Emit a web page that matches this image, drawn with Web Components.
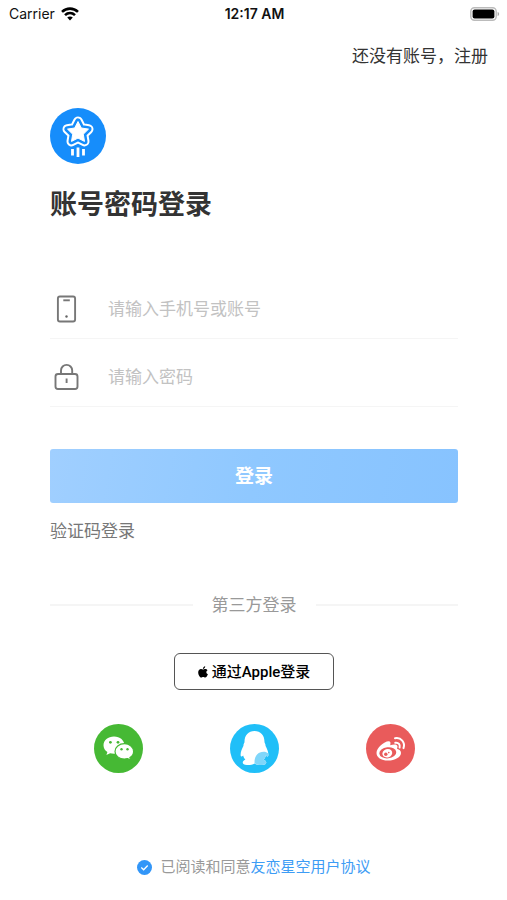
<!DOCTYPE html>
<html lang="zh-CN">
<head>
<meta charset="utf-8">
<meta name="viewport" content="width=device-width, initial-scale=1">
<title>账号密码登录</title>
<style>
  body { margin: 0; background: #fff; color: #333; font-family: Inter, "Noto Sans CJK SC", sans-serif; font-size: 17px; line-height: 24px; }
</style>
</head>
<body>
<login-page></login-page>

<script>
const define = (name, html, setup) => {
  const template = document.createElement('template');
  template.innerHTML = html;
  customElements.define(name, class extends HTMLElement {
    constructor() {
      super();
      this.attachShadow({ mode: 'open' }).append(template.content.cloneNode(true));
    }
    connectedCallback() { if (setup) setup(this, this.shadowRoot); }
  });
};

define('status-bar', `
  <style>
    :host { display: grid; grid-template-columns: 1fr auto 1fr; align-items: center; height: 28px; padding: 0 7px 0 9px; color: #111; font-size: 14px; line-height: 20px; }
    .carrier { display: flex; align-items: center; gap: 6px; }
    .time { font-weight: 600; }
    .battery { justify-self: end; }
    svg { display: block; }
  </style>
  <span class="carrier"><span>Carrier</span>
    <svg width="18" height="14" viewBox="0 0 18 14" fill="none" stroke="#000" stroke-width="2.6" aria-hidden="true">
      <path d="M1 4.9C5.6.5 12.4.5 17 4.9"/><path d="M4 8.1c2.9-2.7 7.1-2.7 10 0"/><path d="M6.2 10.5c1.6-1.5 4-1.5 5.6 0L9 13.4z" fill="#000" stroke="none"/>
    </svg>
  </span>
  <span class="time">12:17 AM</span>
  <svg class="battery" width="30" height="14" viewBox="0 0 30 14" aria-hidden="true">
    <rect x=".8" y=".8" width="25.4" height="12.4" rx="3.6" fill="#fff" stroke="#bbb" stroke-width="1.4"/>
    <rect x="2.6" y="2.6" width="21.8" height="8.8" rx="2" fill="#000"/>
    <path d="M27.6 5c2 .6 2 3.4 0 4z" fill="#aaa"/>
  </svg>`);

define('brand-logo', `
  <style>:host { display: block; } svg { display: block; }</style>
  <svg width="56" height="56" viewBox="0 0 56 56" role="img" aria-label="友恋星空">
    <defs><path id="star" d="M28 13.500L31.300 20l7.200 1.100-5.200 5.100 1.200 7.200-6.500-3.300-6.500 3.300 1.200-7.200-5.200-5.100 7.200-1.100z" stroke-linejoin="round"/></defs>
    <circle cx="28" cy="28" r="28" fill="#168dfb"/>
    <use href="#star" fill="#fff" stroke="#fff" stroke-width="10"/>
    <use href="#star" fill="#168dfb" stroke="#168dfb" stroke-width="6"/>
    <use href="#star" fill="#fff" stroke="#fff" stroke-width="1"/>
    <path d="M22.500 41v6.500M28 39.500v9.500M33.500 41v6.500" stroke="#168dfb" stroke-width="5"/>
    <path d="M22.500 41v6.500M28 39.500v9.500M33.500 41v6.500" stroke="#fff" stroke-width="2.800"/>
  </svg>`);

define('login-field', `
  <style>
    :host { display: block; }
    .row { display: flex; align-items: center; gap: 25px; height: 59px; box-sizing: border-box; border-bottom: 1px solid #f5f5f5; }
    label { display: flex; flex: none; }
    input { flex: 1; min-width: 0; border: 0; outline: 0; padding: 0; background: none; color: #333; font: inherit; }
    input::placeholder { color: #c2c2c2; opacity: 1; }
  </style>
  <div class="row"><label for="value"><slot></slot></label><input id="value"></div>`,
  (host, root) => {
    const input = root.querySelector('input');
    input.type = host.getAttribute('type') || 'text';
    input.placeholder = host.getAttribute('placeholder');
    input.setAttribute('aria-label', host.getAttribute('placeholder'));
  });

define('primary-button', `
  <style>
    :host { display: block; }
    button { display: block; width: 100%; height: 54px; border: 0; border-radius: 3px; padding: 2px 0 0; background: linear-gradient(100deg, #a0cfff, #8fc8ff 50%, #87c3ff); color: #fff; font: inherit; font-size: 19px; font-weight: 700; }
  </style>
  <button type="submit"><slot></slot></button>`);

define('line-divider', `
  <style>
    :host { display: flex; align-items: center; gap: 19px; color: #999; }
    :host::before, :host::after { content: ""; flex: 1; height: 2px; background: #f5f5f5; }
  </style>
  <slot></slot>`);

define('apple-button', `
  <style>
    :host { display: block; }
    button { display: flex; align-items: center; justify-content: center; gap: 4px; height: 37px; padding: 0 23px; border: 1px solid #555; border-radius: 6px; background: #fff; color: #000; font: inherit; font-family: Roboto, "Noto Sans CJK SC", sans-serif; font-size: 15px; font-weight: 500; white-space: nowrap; }
  </style>
  <button type="button">
    <svg width="10" height="12" viewBox="0 0 10 12" aria-hidden="true"><path d="M5 3.5C5.7 3.5 6.3 3 7.3 3c.9 0 1.7.5 2.2 1.2-1.8 1.1-1.5 3.4.4 4.1C9.4 9.7 8.3 11.5 7.2 11.5c-.8 0-1.1-.5-2-.5s-1.3.5-2 .5C1.8 11.5.2 8.8.2 6.5.2 4.300 1.500 3 3 3c.9 0 1.500.5 2 .5zM4.900 2.900C4.900 1.500 5.800.6 7.200.3 7.300 1.800 6.200 2.900 4.900 2.900z"/></svg>
    <span><slot></slot></span>
  </button>`);

define('social-button', `
  <style>
    :host { display: block; }
    button { display: block; padding: 0; border: 0; border-radius: 50%; background: none; }
    ::slotted(svg) { display: block; }
  </style>
  <button type="button"><slot></slot></button>`,
  (host, root) => root.querySelector('button').setAttribute('aria-label', host.getAttribute('name')));

define('terms-agreement', `
  <style>
    :host { display: flex; align-items: center; justify-content: center; font-size: 15px; color: #999; }
    .box { display: grid; margin-right: 8px; }
    input, svg { grid-area: 1 / 1; width: 15px; height: 15px; margin: 0; }
    input { appearance: none; border: 1px solid #bbb; border-radius: 50%; }
    input:checked { border: 0; background: #3296f8; }
    svg { pointer-events: none; }
    input:not(:checked) + svg { visibility: hidden; }
    a { color: #3d9cf5; text-decoration: none; }
  </style>
  <span class="box"><input type="checkbox" id="agree" checked>
    <svg viewBox="0 0 14 14" fill="none" stroke="#fff" stroke-width="1.2" aria-hidden="true"><path d="M4 7l2.200 2.100 3.800-3.900"/></svg></span>
  <label for="agree">已阅读和同意</label><a href="#terms">友恋星空用户协议</a>`);

define('login-page', `
  <style>
    :host { display: block; }
    header { display: flex; justify-content: flex-end; padding: 16px 19px 0; }
    a { text-decoration: none; color: #333; }
    main { padding: 40px 49px 0 50px; }
    h1 { margin: 22px 0 0; font-size: 27px; line-height: 38px; font-weight: 700; }
    form { margin-top: 56px; }
    login-field + login-field { margin-top: 9px; }
    primary-button { margin-top: 42px; }
    .code { display: block; width: max-content; margin-top: 16px; color: #777; }
    line-divider { margin-top: 50px; }
    .apple { display: flex; justify-content: center; margin-top: 36px; }
    .social { display: grid; grid-template-columns: repeat(3, 1fr); justify-items: center; margin-top: 34px; }
    terms-agreement { margin-top: 82px; }
  </style>
  <status-bar></status-bar>
  <header><a href="#register">还没有账号，注册</a></header>
  <main>
    <brand-logo></brand-logo>
    <h1>账号密码登录</h1>
    <form>
      <login-field placeholder="请输入手机号或账号">
        <svg width="33" height="30" viewBox="0 0 33 30" fill="none" stroke="#777" stroke-width="1.900" aria-hidden="true"><rect x="7.900" y="2.500" width="17.200" height="25" rx="2"/><path d="M13.300 6.300h6.500"/><circle cx="16.500" cy="22.500" r="1.200" fill="#666" stroke="none"/></svg>
      </login-field>
      <login-field type="password" placeholder="请输入密码">
        <svg width="33" height="30" viewBox="0 0 33 30" fill="none" stroke="#777" stroke-width="1.900" aria-hidden="true"><rect x="5.500" y="12" width="22" height="15" rx="2.500"/><path d="M11 12V8.500a5.600 5.600 0 0 1 11.200 0V12M16.600 16.500v4.500"/></svg>
      </login-field>
      <primary-button>登录</primary-button>
    </form>
    <a class="code" href="#code">验证码登录</a>
    <line-divider>第三方登录</line-divider>
    <div class="apple"><apple-button>通过Apple登录</apple-button></div>
    <div class="social">
      <social-button name="微信登录">
        <svg width="49" height="49" viewBox="0 0 49 49" aria-hidden="true">
          <circle cx="24.500" cy="24.500" r="24.500" fill="#46b934"/>
          <path d="M20 12.500c-6 0-10.500 3.900-10.500 8.800 0 2.900 1.500 5.200 3.900 6.800l-1 3 3.700-1.800c1.200.3 2.500.5 3.900.5 6 0 10.500-3.700 10.500-8.500s-4.500-8.800-10.500-8.800z" fill="#fff"/>
          <path d="M30.500 19.700c-5.400 0-9.500 3.400-9.500 7.700s4.100 7.700 9.500 7.700c1.100 0 2.200-.2 3.200-.5l3 1.700-.8-2.700c2.300-1.400 3.700-3.600 3.700-6.200 0-4.300-4-7.700-9.100-7.700z" fill="#fff" stroke="#46b934" stroke-width="1.200"/>
          <g fill="#46b934"><circle cx="16.400" cy="18.300" r="1.400"/><circle cx="24" cy="18.300" r="1.400"/><circle cx="27.500" cy="25.300" r="1.200"/><circle cx="33.500" cy="25.300" r="1.200"/></g>
        </svg>
      </social-button>
      <social-button name="QQ登录">
        <svg width="49" height="49" viewBox="0 0 49 49" aria-hidden="true">
          <circle cx="24.500" cy="24.500" r="24.500" fill="#20bff8"/>
          <path d="M24.500 7c-6.200 0-10.200 4.500-10 11.300-.4 1-1.200 2-1 3.400-1.500 2.900-2.900 6-2.900 9 0 2 .8 2.500 2.600.8.300 1.700 1.100 3 2.200 4-4.100 1.800-3.400 5.500 1.500 5.600 3 .1 5.900-.3 7.600-1.700 1.700 1.400 4.600 1.800 7.600 1.700 4.900-.1 5.600-3.800 1.500-5.600 1.100-1 1.900-2.300 2.200-4 1.800 1.700 2.600 1.200 2.600-.8 0-3-1.400-6.100-2.900-9 .2-1.400-.6-2.400-1-3.400C34.700 11.500 30.700 7 24.500 7z" fill="#fff"/>
          <path d="M24.600 39.300c-.7-6.700 3.300-11.500 9-11.500 1.900 0 3.400.6 4.500 1.500.2.600.3 1 .3 1.400 0 2-.8 2.500-2.600.8-.3 1.700-1.100 3-2.200 4 4.100 1.800 3.400 5.500-1.500 5.600-3 .1-5.800-.4-7.500-1.800z" fill="#7fd6fa"/>
        </svg>
      </social-button>
      <social-button name="微博登录">
        <svg width="49" height="49" viewBox="0 0 49 49" aria-hidden="true">
          <circle cx="24.500" cy="24.500" r="24.500" fill="#e95b5b"/>
          <path d="M22.500 17.300c2-.1 2.400 1.500 1.700 4 3.300-1.200 7.200-1.500 7.300 1.300 0 .7-.3 1.500-.5 2.100 2.500.8 4 2 4 4.200 0 4-6.100 7.700-13 7.700S10.500 33.400 10.500 29c0-5 7.700-11.600 12-11.700z" fill="#fff"/>
          <ellipse cx="21.800" cy="28.800" rx="8.500" ry="5.600" fill="#e95b5b" transform="rotate(-6 21.800 28.800)"/>
          <ellipse cx="21.300" cy="29.200" rx="5" ry="4.200" fill="#fff" transform="rotate(-18 21.300 29.200)"/>
          <circle cx="19.800" cy="30.300" r="1.700" fill="#e95b5b"/><circle cx="22.800" cy="28.600" r=".8" fill="#e95b5b"/>
          <path d="M29.300 18.800c3.200-.5 5.200 1.800 4.300 4.800M29 14.300c6-1.200 10.500 4 8.500 9.800" fill="none" stroke="#fff" stroke-width="2" stroke-linecap="round"/>
        </svg>
      </social-button>
    </div>
    <terms-agreement></terms-agreement>
  </main>`);
</script>
</body>
</html>
